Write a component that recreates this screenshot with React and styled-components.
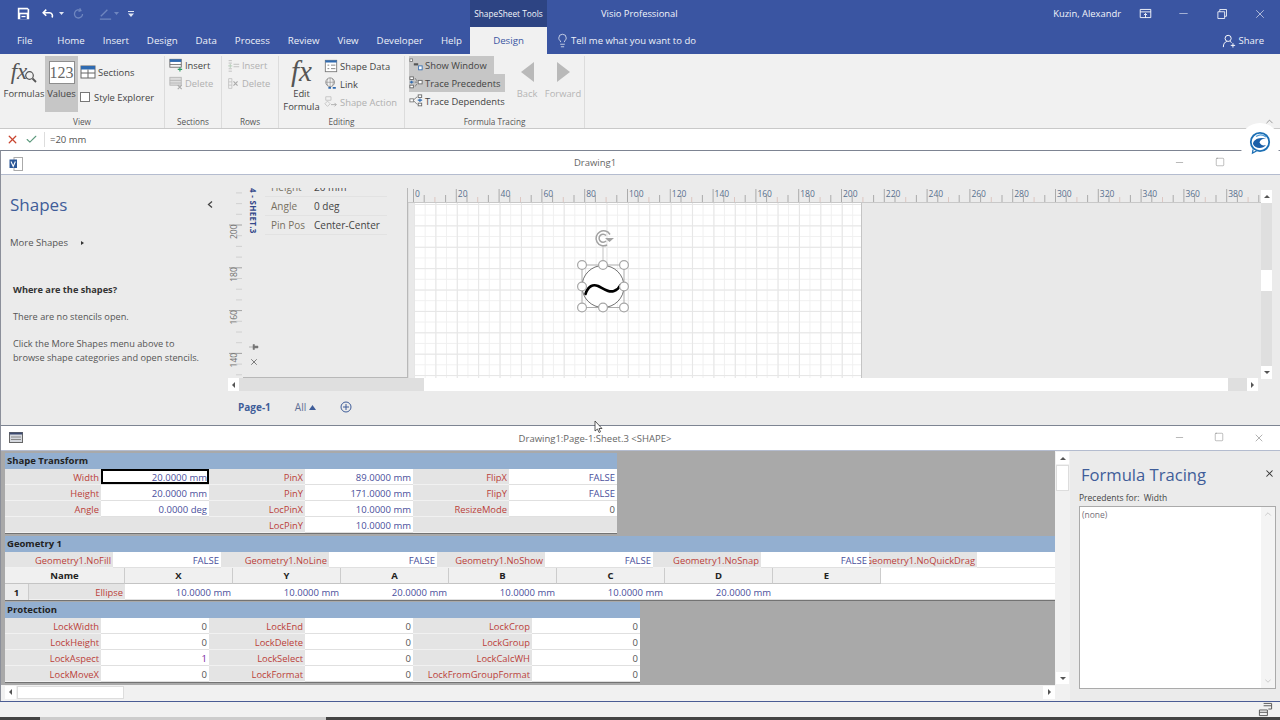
import React from "react";
import styled, { createGlobalStyle } from "styled-components";
import { Lightbulb, X, Minus, Square, ChevronUp, Check } from "lucide-react";

const GlobalStyle = createGlobalStyle`
  html, body { margin: 0; padding: 0; background: #f1f1f1; }
  * { box-sizing: border-box; }
  body { font-family: "Open Sans", "Liberation Sans", sans-serif; font-size: 9.5px; color: #444; }
`;

const Page = styled.div`
  position: relative;
  width: 1280px;
  height: 720px;
  overflow: hidden;
  display: flex;
  flex-direction: column;
`;

/* ---------- top blue bars ---------- */
const TitleBar = styled.div`
  height: 27px;
  flex: none;
  display: flex;
  align-items: center;
  background: #3a55a2;
  color: #f2f4fa;
`;
const Qat = styled.div`
  width: 470px;
  flex: none;
  display: flex;
  align-items: center;
  padding-left: 17px;
`;
const QatItem = styled.span`
  display: flex;
  margin-left: ${(p) => p.$ml || 0}px;
`;
const ToolsLabel = styled.div`
  width: 77px;
  height: 27px;
  flex: none;
  display: flex;
  align-items: center;
  justify-content: center;
  background: #2d4483;
  font-size: 8.3px;
`;
const AppTitle = styled.div`
  margin-left: 54px;
  font-size: 9.4px;
`;
const UserName = styled.div`
  margin-left: auto;
  margin-right: 18px;
  font-size: 9.4px;
`;
const WinIcons = styled.div`
  display: flex;
  align-items: center;
  justify-content: space-between;
  width: 141px;
  padding-right: 13px;
`;
const TabBar = styled.div`
  height: 27px;
  flex: none;
  display: flex;
  align-items: center;
  background: #3a55a2;
  color: #eef1f8;
`;
const TabList = styled.div`
  width: 470px;
  flex: none;
  display: flex;
  padding-left: 8px;
`;
const Tab = styled.div`
  padding: 0 9px;
  font-size: 9.7px;
  margin-right: ${(p) => p.$after || 0}px;
`;
const ActiveTab = styled.div`
  width: 77px;
  height: 27px;
  display: flex;
  align-items: center;
  justify-content: center;
  background: #f1f1f1;
  color: #3a55a2;
  font-size: 9.7px;
`;
const TellMe = styled.div`
  margin-left: 8px;
  display: flex;
  align-items: center;
  gap: 1px;
  font-size: 9.5px;
`;
const ShareBtn = styled.div`
  margin-left: auto;
  margin-right: 16px;
  display: flex;
  align-items: center;
  gap: 2px;
  font-size: 9.5px;
`;

/* ---------- ribbon ---------- */
const Ribbon = styled.div`
  position: relative;
  height: 75px;
  flex: none;
  display: flex;
  padding-top: 2px;
  background: #f1f1f1;
  border-bottom: 1px solid #c9c9c9;
`;
const Group = styled.div`
  width: ${(p) => p.$w}px;
  flex: none;
  display: flex;
  flex-direction: column;
  border-right: 1px solid #dcdcdc;
`;
const GroupBody = styled.div`
  flex: 1;
  display: flex;
  padding-left: ${(p) => p.$pad || 0}px;
`;
const GroupLabel = styled.div`
  height: 13px;
  text-align: center;
  font-size: 8.2px;
  color: #555;
  line-height: 14px;
`;
const BigBtn = styled.div`
  width: ${(p) => p.$w}px;
  height: 56px;
  flex: none;
  display: flex;
  flex-direction: column;
  align-items: center;
  font-size: 9.4px;
  line-height: 13px;
  text-align: center;
  color: ${(p) => (p.$off ? "#b5b5b5" : "#444")};
  background: ${(p) => (p.$on ? "#c6c6c6" : "transparent")};
`;
const BigIcon = styled.div`
  height: 30px;
  flex: none;
  display: flex;
  align-items: center;
  justify-content: center;
`;
const BigText = styled.span`
  margin-top: 1px;
`;
const FxGlyph = styled.span`
  font-family: "Liberation Serif", serif;
  font-style: italic;
  font-size: ${(p) => p.$size}px;
  color: #555;
  line-height: 1;
`;
const FxWrap = styled.span`
  display: flex;
  align-items: flex-end;
  svg { margin-left: -3px; }
`;
const NumBox = styled.span`
  width: 26px;
  height: 23px;
  margin-top: 3px;
  display: flex;
  align-items: center;
  justify-content: center;
  background: #fff;
  border: 1px solid #8e8e8e;
  font-family: "Liberation Serif", serif;
  font-size: 16px;
  color: #666;
`;
const SmallCol = styled.div`
  width: ${(p) => (p.$w ? `${p.$w}px` : "auto")};
  flex: none;
  margin-left: ${(p) => p.$ml || 0}px;
  display: flex;
  flex-direction: column;
  padding-top: ${(p) => p.$top || 0}px;
  gap: ${(p) => p.$gap || 0}px;
`;
const SmallBtn = styled.div`
  height: 18px;
  display: flex;
  align-items: center;
  gap: 2px;
  padding-right: 1px;
  width: ${(p) => (p.$w ? `${p.$w}px` : "auto")};
  font-size: 9.4px;
  white-space: nowrap;
  color: ${(p) => (p.$off ? "#b0b0b0" : "#444")};
  background: ${(p) => (p.$on ? "#c6c6c6" : "transparent")};
`;
const CheckBox = styled.span`
  width: 10px;
  height: 10px;
  margin-right: 2px;
  background: #fff;
  border: 1px solid #777;
`;
const Arrow = styled.div`
  width: 0;
  height: 0;
  margin-top: 1px;
  border-top: 10.5px solid transparent;
  border-bottom: 10.5px solid transparent;
  ${(p) => (p.$left ? "border-right" : "border-left")}: 13px solid #b9b9b9;
`;
const Collapse = styled.div`
  position: absolute;
  right: 5px;
  bottom: 1px;
  color: #555;
  line-height: 0;
`;

/* ---------- formula bar ---------- */
const FormulaBar = styled.div`
  height: 21px;
  flex: none;
  display: flex;
  align-items: center;
  background: #fff;
  padding-left: 6px;
  gap: 6px;
`;
const FormulaText = styled.div`
  height: 15px;
  line-height: 15px;
  padding-left: 5px;
  border-left: 1px solid #ddd;
  font-size: 9.5px;
  color: #555;
`;

/* ---------- document windows ---------- */
const DocWindow = styled.div`
  height: ${(p) => p.$h}px;
  flex: none;
  display: flex;
  flex-direction: column;
  border-top: 1px solid #7d8492;
  border-left: 1px solid #8b8f9a;
`;
const DocTitle = styled.div`
  position: relative;
  height: ${(p) => p.$h}px;
  flex: none;
  display: flex;
  align-items: center;
  justify-content: center;
  padding-right: 91px;
  background: #fff;
  border-bottom: 1px solid #b4bccf;
  font-size: 9.5px;
  color: #666;
`;
const DocIcon = styled.div`
  position: absolute;
  left: 8px;
  top: 6px;
  line-height: 0;
`;
const DocControls = styled.div`
  position: absolute;
  right: 15px;
  top: 6px;
  width: 91px;
  display: flex;
  justify-content: space-between;
  color: #666;
  line-height: 0;
`;
const ControlGap = styled.span`
  width: 11px;
`;
const DrawingBody = styled.div`
  flex: 1;
  display: flex;
  min-height: 0;
  background: #ebebeb;
`;
const ShapesPanel = styled.div`
  width: 227px;
  flex: none;
  padding: 18px 0 0 9px;
  color: #555;
`;
const PanelHead = styled.div`
  display: flex;
  align-items: center;
  justify-content: space-between;
  padding-right: 15px;
  font-size: 17px;
  color: #3f5d99;
`;
const MoreShapes = styled.div`
  margin-top: 20px;
  display: flex;
  align-items: center;
  gap: 13px;
  font-size: 9.5px;
`;
const Tri = styled.span`
  width: 0;
  height: 0;
  border-top: 2.5px solid transparent;
  border-bottom: 2.5px solid transparent;
  border-left: 3px solid #333;
`;
const Tip = styled.div`
  padding-left: 3px;
  font-size: 9.2px;
  line-height: 13.5px;
  margin-top: ${(p) => p.$top}px;
  font-weight: ${(p) => (p.$bold ? 700 : 400)};
  color: ${(p) => (p.$bold ? "#333" : "#555")};
`;
const DrawingArea = styled.div`
  width: 1052px;
  flex: none;
  padding-top: 13px;
  display: flex;
  flex-direction: column;
`;
const DrawingRow = styled.div`
  height: 190px;
  flex: none;
  display: flex;
`;
const VRuler = styled.svg`
  width: 15px;
  height: 190px;
  flex: none;
`;
const DataWindow = styled.div`
  position: relative;
  width: 165px;
  flex: none;
  overflow: hidden;
  background: #ebebeb;
  border-right: 1px solid #b8b8b8;
  border-bottom: 1px solid #b8b8b8;
  display: flex;
`;
const DataSide = styled.div`
  width: 22px;
  flex: none;
  display: flex;
  flex-direction: column;
  align-items: center;
  justify-content: space-between;
  padding-bottom: 10px;
  padding-right: 1px;
`;
const SideTitle = styled.div`
  writing-mode: vertical-rl;
  font-size: 8px;
  font-weight: 700;
  letter-spacing: 0.3px;
  color: #33488a;
  white-space: nowrap;
`;
const SideTools = styled.div`
  display: flex;
  flex-direction: column;
  gap: 6px;
  align-items: center;
  color: #444;
  line-height: 0;
`;
const DataRows = styled.div`
  margin-top: -10px;
  flex: 1;
  padding-right: 20px;
`;
const DataRow = styled.div`
  height: 19px;
  display: grid;
  grid-template-columns: 43px 1fr;
  align-items: center;
  padding-left: 6px;
  border-bottom: 1px solid #e2e2e2;
  font-size: 10px;
  color: #444;
`;
const DataKey = styled.span`
  color: #77705f;
`;
const CanvasCol = styled.div`
  width: 853px;
  flex: none;
  display: flex;
  flex-direction: column;
`;
const HRuler = styled.svg`
  width: 853px;
  height: 15px;
  flex: none;
`;
const Canvas = styled.div`
  position: relative;
  flex: 1;
  padding-left: 5px;
  background: #e9e9e9;
  border-left: 1px solid #dcdcdc;
  overflow: hidden;
`;
const DrawingPage = styled.div`
  width: 448px;
  height: 100%;
  background-color: #fff;
  border-right: 1px solid #c4c4c4;
  background-image:
    linear-gradient(to right, #e6e6e6 1px, transparent 1px),
    linear-gradient(to bottom, #e6e6e6 1px, transparent 1px),
    linear-gradient(to right, #f0f0f0 1px, transparent 1px),
    linear-gradient(to bottom, #f0f0f0 1px, transparent 1px);
  background-size: 21.4px 21.4px, 21.4px 21.4px, 10.7px 10.7px, 10.7px 10.7px;
  background-position: 0 1px;
`;
const ShapeLayer = styled.svg`
  position: absolute;
  left: 5px;
  top: 0;
`;
const VScroll = styled.div`
  width: 11px;
  flex: none;
  display: flex;
  flex-direction: column;
  background: #dfdfdf;
  height: 189px;
  margin-top: 2px;
`;
const ScrollBtn = styled.div`
  width: ${(p) => p.$w || 11}px;
  height: ${(p) => p.$h || 13}px;
  flex: none;
  display: flex;
  align-items: center;
  justify-content: center;
  background: #fff;
  margin: ${(p) => p.$m || 0};
`;
const ScrollTri = styled.span`
  width: 0;
  height: 0;
  ${(p) =>
    p.$dir === "up" &&
    "border-left: 3px solid transparent; border-right: 3px solid transparent; border-bottom: 3px solid #555;"}
  ${(p) =>
    p.$dir === "down" &&
    "border-left: 3px solid transparent; border-right: 3px solid transparent; border-top: 3px solid #555;"}
  ${(p) =>
    p.$dir === "left" &&
    "border-top: 3px solid transparent; border-bottom: 3px solid transparent; border-right: 3px solid #555;"}
  ${(p) =>
    p.$dir === "right" &&
    "border-top: 3px solid transparent; border-bottom: 3px solid transparent; border-left: 3px solid #555;"}
`;
const VThumb = styled.div`
  width: 11px;
  height: 21px;
  flex: none;
  margin-top: 67px;
  margin-bottom: auto;
  background: #fff;
`;
const HScroll = styled.div`
  height: 13px;
  width: 1030px;
  flex: none;
  display: flex;
  background: #dfdfdf;
`;
const HThumb = styled.div`
  width: 804px;
  margin-left: 185px;
  margin-right: auto;
  background: #fff;
`;
const PageTabs = styled.div`
  margin-top: 9px;
  display: flex;
  align-items: center;
  padding-left: 10px;
  font-size: 10px;
  color: #667;
`;
const PageName = styled.span`
  font-weight: 700;
  color: #3f5d99;
  margin-right: 24px;
`;
const AllTabs = styled.span`
  display: flex;
  align-items: center;
  gap: 3px;
  color: #5f6f95;
  margin-right: 24px;
`;

/* ---------- shapesheet ---------- */
const SheetBody = styled.div`
  flex: 1;
  display: flex;
  min-height: 0;
`;
const SheetCol = styled.div`
  width: 1069px;
  flex: none;
  display: flex;
  flex-direction: column;
`;
const SheetTop = styled.div`
  flex: 1;
  min-height: 0;
  display: flex;
`;
const SheetArea = styled.div`
  width: 1054px;
  flex: none;
  overflow: hidden;
  padding: 2px 0 0 4px;
  background: #a9a9a9;
`;
const Section = styled.div`
  width: ${(p) => p.$w};
  margin-bottom: ${(p) => p.$mb || 0}px;
  border-bottom: 1px solid #737373;
  background: #fff;
`;
const SectionHead = styled.div`
  height: 16px;
  padding: 0 0 1px 2px;
  display: flex;
  align-items: center;
  background: #93afd0;
  font-size: 9.5px;
  font-weight: 700;
  color: #222;
`;
const SheetGrid = styled.div`
  display: grid;
  grid-template-columns: ${(p) => p.$cols};
  grid-auto-rows: 16px;
`;
const Label = styled.div`
  display: flex;
  align-items: center;
  justify-content: flex-end;
  overflow: hidden;
  white-space: nowrap;
  padding: 1px 2px 0 0;
  background: #e4e4e4;
  border-bottom: 1px solid #f1f1f1;
  font-size: 9.4px;
  color: #bb3f3a;
`;
const Value = styled.div`
  display: flex;
  align-items: center;
  justify-content: flex-end;
  white-space: nowrap;
  padding: 1px 2px 0 0;
  background: #fff;
  border-bottom: 1px solid #e0e0e0;
  font-size: 9.5px;
  color: ${(p) => p.$color || "#4a4f9c"};
  ${(p) => p.$active && "box-shadow: inset 0 0 0 2px #000;"}
`;
const ColHead = styled.div`
  grid-column: span ${(p) => p.$span || 1};
  display: flex;
  align-items: center;
  justify-content: center;
  background: #f0f0f0;
  border-right: 1px solid #ccc;
  border-bottom: 1px solid #c4c4c4;
  font-size: 9.5px;
  font-weight: 700;
  color: #222;
`;
const RowNum = styled(ColHead)`
  background: #ececec;
  border-bottom: none;
`;
const Blank = styled.div`
  background: #fff;
  border-bottom: 1px solid #e0e0e0;
`;
const SheetVScroll = styled.div`
  width: 15px;
  flex: none;
  display: flex;
  flex-direction: column;
  background: #f1f1f1;
`;
const SheetVThumb = styled.div`
  width: 13px;
  height: 26px;
  margin: 1px 1px auto;
  background: #fff;
  border: 1px solid #ddd;
`;
const SheetHScroll = styled.div`
  height: 14px;
  width: 1054px;
  flex: none;
  display: flex;
  align-items: center;
  padding-left: 4px;
  background: #f1f1f1;
`;
const SheetHThumb = styled.div`
  width: 107px;
  height: 13px;
  margin-left: 1px;
  margin-right: auto;
  background: #fff;
  border: 1px solid #ddd;
`;
const SheetFoot = styled.div`
  height: 2px;
  flex: none;
  background: #f1f1f1;
`;
const TracePanel = styled.div`
  flex: 1;
  padding: 14px 4px 0 9px;
  background: #ebebeb;
`;
const TraceHead = styled.div`
  display: flex;
  align-items: center;
  justify-content: space-between;
  padding: 0 1px 0 2px;
  font-size: 16.6px;
  line-height: 20px;
  color: #3f5d99;
  svg { margin-top: -4px; }
`;
const TraceFor = styled.div`
  margin-top: 7px;
  font-size: 8.5px;
  line-height: 12px;
  color: #444;
`;
const TraceBox = styled.div`
  position: relative;
  height: 183px;
  margin-top: 2px;
  padding: 2px;
  background: #fff;
  border: 1px solid #aaa;
  font-size: 8.5px;
  color: #76707a;
`;
const TraceScroll = styled.div`
  position: absolute;
  right: 0;
  top: 0;
  bottom: 0;
  width: 14px;
  padding: 2px 0;
  display: flex;
  flex-direction: column;
  align-items: center;
  justify-content: space-between;
  background: #f4f4f4;
  color: #c4c4c4;
  line-height: 0;
`;
const FlipDown = styled.span`
  display: flex;
  transform: rotate(180deg);
`;

/* ---------- status bar and overlays ---------- */
const StatusBar = styled.div`
  flex: 1;
  display: flex;
  align-items: center;
  justify-content: flex-end;
  padding-right: 7px;
  background: #f1f1f1;
  border-top: 1px solid #4a5c94;
`;
const Foot = styled.div`
  height: 3px;
  flex: none;
  background: linear-gradient(to right, #444 40px, #ccc 40px, #ccc 326px, #444 326px);
`;
const Bubble = styled.div`
  position: absolute;
  left: 1240px;
  top: 123px;
  width: 40px;
  height: 40px;
  display: flex;
  align-items: center;
  justify-content: center;
  border-radius: 50%;
  background: #fff;
`;
const Cursor = styled.svg`
  position: absolute;
  left: 594px;
  top: 420px;
`;

/* ---------- icons ---------- */
const Icon = ({ children, size = 14 }) => (
  <svg width={size} height={size} viewBox="0 0 16 16" fill="none">
    {children}
  </svg>
);
const SaveIcon = () => (
  <Icon size={13}>
    <path d="M1 1h12l2 2v12H1z" fill="#fff" />
    <rect x="3" y="3" width="10" height="4" fill="#3a55a2" />
    <rect x="4" y="9" width="8" height="6" fill="#3a55a2" />
    <rect x="5.5" y="11" width="5" height="1.500" fill="#fff" />
  </Icon>
);
const UndoIcon = () => (
  <Icon size={14}>
    <path d="M6 3L2.500 6.500 6 10M3 6.500h6.500a3.500 3.500 0 0 1 3 5.500" stroke="#fff" strokeWidth="1.800" />
  </Icon>
);
const RedoIcon = () => (
  <Icon size={13}>
    <path d="M11 4.500A5 5 0 1 0 13 8.500M9.500 1.500l1.500 3-3 1" stroke="#6f86bf" strokeWidth="1.600" />
  </Icon>
);
const PenIcon = () => (
  <Icon size={15}>
    <path d="M3 11L10 4M2 14h12" stroke="#6f86bf" strokeWidth="1.400" />
  </Icon>
);
const DropTri = ({ color = "#dfe5f3" }) => (
  <svg width="5" height="4" viewBox="0 0 5 4">
    <path d="M0 0h5L2.500 3z" fill={color} />
  </svg>
);
const CustomizeIcon = () => (
  <svg width="6" height="6" viewBox="0 0 6 6">
    <path d="M0 0h6v1H0zM0 2.500h6L3 6z" fill="#dfe5f3" />
  </svg>
);
const RestoreIcon = () => (
  <Icon size={12}>
    <path d="M2.500 5h9v9h-9zM5 5V2h9v9h-2.500" stroke="#fff" strokeWidth="1.100" />
  </Icon>
);
const RibbonOptIcon = () => (
  <Icon size={13}>
    <path d="M1.500 3h13v10h-13zM1.500 6h13M8 13V8M6 10l2-2 2 2" stroke="#fff" strokeWidth="1.100" />
  </Icon>
);
const ShareIcon = () => (
  <Icon size={14}>
    <circle cx="7" cy="5" r="3.500" stroke="#fff" strokeWidth="1.100" />
    <path d="M1.500 15c0-4 2-6 4-6.500M9 8.500c.7.200 1.400.600 2 1.200M10 13h5M12.500 10.500v5" stroke="#fff" strokeWidth="1.100" />
  </Icon>
);
const SectionsIcon = () => (
  <Icon size={16}>
    <rect x="1" y="2" width="14" height="12" fill="#fff" stroke="#666" />
    <rect x="1" y="2" width="14" height="3.500" fill="#2f6ab0" />
    <path d="M1 9h14M8 5.500V14" stroke="#666" />
  </Icon>
);
const InsertIcon = () => (
  <Icon size={14}>
    <rect x="1" y="1.500" width="13" height="9" fill="#fff" stroke="#666" />
    <rect x="1" y="1.500" width="13" height="3" fill="#2f6ab0" />
    <path d="M1 7.500h13" stroke="#666" />
    <path d="M10 13h5M12.500 10.500v5" stroke="#2e9b62" strokeWidth="1.300" />
  </Icon>
);
const DeleteIcon = () => (
  <Icon size={14}>
    <rect x="1" y="1.500" width="13" height="9" fill="#ddd" stroke="#b5b5b5" />
    <path d="M1 5h13M1 8h13" stroke="#b5b5b5" />
    <path d="M10 10.500l4.500 4.500M14.500 10.500L10 15" stroke="#aaa" strokeWidth="1.300" />
  </Icon>
);
const RowInsertIcon = () => (
  <Icon size={13}>
    <path d="M2 2h4M2 5h4M2 12h4M2 15h4M8 6.500h7M8 9.500h7" stroke="#c0c0c0" strokeWidth="1.200" />
    <path d="M1.500 8.500h5M4 6v5" stroke="#b5cdb9" strokeWidth="1.200" />
  </Icon>
);
const RowDeleteIcon = () => (
  <Icon size={13}>
    <path d="M2 2h4v12H2zM2 6h4M2 10h4" stroke="#c0c0c0" />
    <path d="M8 5.500l5 5M13 5.500l-5 5" stroke="#a9a9a9" strokeWidth="1.400" />
  </Icon>
);
const ShapeDataIcon = () => (
  <Icon size={14}>
    <rect x="1.500" y="1.500" width="13" height="13" fill="#fff" stroke="#777" />
    <rect x="1.500" y="1.500" width="13" height="2.500" fill="#2f6ab0" />
    <path d="M4 7h2M8 7h5M4 11h2M8 11h5" stroke="#777" />
  </Icon>
);
const LinkIcon = () => (
  <Icon size={14}>
    <circle cx="7" cy="6" r="5" stroke="#8a8a8a" />
    <path d="M2 6h10M7 1v10M4.500 2c-1.500 2.500-1.500 5.500 0 8M9.500 2c1.500 2.500 1.500 5.500 0 8" stroke="#8a8a8a" strokeWidth=".7" />
    <path d="M5 12.500h3M10 12.500h3.500" stroke="#2f6ab0" strokeWidth="2" />
  </Icon>
);
const ShapeActionIcon = () => (
  <Icon size={14}>
    <path d="M2 2h6v4H2zM1 10l3-3 3 3-3 3z" stroke="#c2c2c2" />
    <path d="M8 11h6M12 9l2 2-2 2" stroke="#a9a9a9" />
  </Icon>
);
const ShowWindowIcon = () => (
  <Icon size={14}>
    <rect x="1" y="1" width="3" height="3" fill="#fff" stroke="#777" />
    <rect x="5.500" y="6" width="5" height="2.500" fill="#555" />
    <rect x="11" y="9" width="4" height="4.500" fill="#fff" stroke="#2f6ab0" />
  </Icon>
);
const TracePrecIcon = () => (
  <Icon size={14}>
    <rect x="1" y="1" width="4" height="3" fill="#fff" stroke="#666" />
    <path d="M1 7h4M3 5.500v3" stroke="#2f6ab0" strokeWidth="1.200" />
    <rect x="1" y="10.500" width="4" height="3" fill="#fff" stroke="#666" />
    <path d="M6.500 7h3M7 2.500l2 3M7 12l2-3" stroke="#777" />
    <rect x="10.500" y="5" width="4.500" height="4" fill="#fff" stroke="#666" />
  </Icon>
);
const TraceDepIcon = () => (
  <Icon size={14}>
    <rect x="1" y="5.500" width="4" height="3.500" fill="#fff" stroke="#777" />
    <path d="M5.500 6.500l4-3.500M5.500 8l4 4" stroke="#777" />
    <rect x="10.500" y="1" width="4" height="3" fill="#fff" stroke="#666" />
    <path d="M10 7h5M12.500 5v4" stroke="#2f6ab0" strokeWidth="1.200" />
    <rect x="10.500" y="10.500" width="4" height="3" fill="#fff" stroke="#666" />
  </Icon>
);
const MagnifyFx = () => (
  <FxWrap>
    <FxGlyph $size={23}>fx</FxGlyph>
    <svg width="13" height="13" viewBox="0 0 13 13">
      <circle cx="5.500" cy="5.500" r="3.800" fill="none" stroke="#555" strokeWidth="1.200" />
      <path d="M8.500 8.500l3.500 3.500" stroke="#555" strokeWidth="1.800" />
    </svg>
  </FxWrap>
);
const VisioIcon = () => (
  <svg width="14" height="14" viewBox="0 0 14 14">
    <rect x="5" y="0.500" width="8.500" height="13" fill="#fff" stroke="#aaa" />
    <rect x="0.500" y="2.500" width="7.500" height="8.500" fill="#2b5797" />
    <path d="M2 4.500l2.200 5 2.200-5" stroke="#fff" fill="none" strokeWidth="1.100" />
  </svg>
);
const SheetIcon = () => (
  <svg width="14" height="11" viewBox="0 0 14 11">
    <rect x="0.500" y="0.500" width="13" height="10" fill="#d5d8de" stroke="#666" />
    <rect x="0.500" y="0.500" width="13" height="2" fill="#3c4a70" />
    <path d="M2 5h10M2 7.500h10" stroke="#888" />
  </svg>
);
const PinIcon = () => (
  <svg width="10" height="8" viewBox="0 0 10 8">
    <path d="M0 4h4M4 1.500h1.500V3H9v2H5.500v1.500H4z" fill="#777" stroke="#777" strokeWidth=".5" />
  </svg>
);
const ChatIcon = () => (
  <svg width="22" height="24" viewBox="0 0 22 24">
    <circle cx="11" cy="11" r="9.200" fill="#fff" stroke="#1c6fb4" strokeWidth="1.800" />
    <path d="M4 13c0-4 6-8 14-5-4-1-7 1-7.500 3.500C12 14 14 15 17 14c-3 4-11 4-13-1z" fill="#1a5fa8" />
    <path d="M7 5.500c3-2 7-2 10 .5" stroke="#4f9ad6" strokeWidth="1.200" fill="none" />
    <path d="M4 18.500l-.500 3.500 4-2" fill="#fff" stroke="#1c6fb4" strokeWidth="1.300" />
  </svg>
);
const TileIcon = () => (
  <Icon size={15}>
    <path d="M6 1.500h8.500v6H11M1.500 8.500H10v6H1.500zM1.500 11h8.500M6 4h8.500" stroke="#555" />
  </Icon>
);

/* ---------- rulers and page drawing ---------- */
const rulerInk = "#8f8f8f";
const labelInk = "#58708f";
const pxPerMm = 2.14;

const TopRuler = () => {
  const ticks = [];
  for (let mm = 0; mm <= 395; mm += 5) {
    const x = 5.5 + mm * pxPerMm;
    const major = mm % 20 === 0;
    const mid = mm % 10 === 0;
    ticks.push(
      <line key={mm} x1={x} x2={x} y1={major ? 1 : mid ? 9 : 7} y2={14} stroke={mid && !major ? "#d9b8b0" : rulerInk} strokeWidth=".7" />,
    );
    if (major) {
      ticks.push(
        <text key={`t${mm}`} x={x + 1.5} y={9} fontSize="8.5" fill={labelInk} fontFamily="Open Sans, sans-serif">
          {mm}
        </text>,
      );
    }
  }
  return (
    <HRuler viewBox="0 0 853 15">
      <rect width="853" height="15" fill="#ebebeb" />
      <line x1="0" x2="853" y1="14.5" y2="14.5" stroke="#c8c8c8" />
      {ticks}
    </HRuler>
  );
};

const SideRuler = () => {
  const ticks = [];
  for (let mm = 215; mm >= 130; mm -= 5) {
    const y = 37 + (200 - mm) * pxPerMm;
    const major = mm % 20 === 0;
    ticks.push(
      <line key={mm} x1={major ? 1 : 8} x2={14} y1={y} y2={y} stroke={major ? rulerInk : "#c9c9c9"} strokeWidth=".8" />,
    );
    if (major) {
      ticks.push(
        <text key={`t${mm}`} transform={`translate(9 ${y + 14}) rotate(-90)`} fontSize="8.5" fill="#70706f" fontFamily="Open Sans, sans-serif">
          {mm}
        </text>,
      );
    }
  }
  return (
    <VRuler viewBox="0 0 15 190">
      <rect width="15" height="190" fill="#ebebeb" />
      {ticks}
    </VRuler>
  );
};

const handles = [
  [582, 265], [603, 265], [624, 265],
  [582, 286.5], [624, 286.5],
  [582, 307.5], [603, 307.5], [624, 307.5],
];

const SelectedShape = () => (
  <ShapeLayer width="447" height="175" viewBox="414 203 447 175" fill="none">
    <circle cx="603" cy="286.5" r="21" fill="#fff" stroke="#333" strokeWidth=".7" />
    <rect x="582" y="265" width="42" height="42.5" stroke="#8a8a8a" strokeWidth=".7" />
    <path d="M585.500 294C588 286 593 284 598 286C604 289 609 293 614 291C617 290 619 288 620.500 285" stroke="#000" strokeWidth="2.600" strokeLinecap="round" />
    <line x1="603" y1="265" x2="603" y2="246" stroke="#cfcfcf" strokeWidth="1.300" />
    <path d="M610 234.500A7.500 7.500 0 1 0 607 245M606 235.500A4 4 0 1 0 606 241" stroke="#a2a2a2" strokeWidth="1.500" />
    <path d="M605 238h9l-4.500 4z" fill="#a2a2a2" />
    {handles.map(([x, y]) => (
      <circle key={`${x}-${y}`} cx={x} cy={y} r="4.400" fill="#fff" stroke="#a6a6a6" strokeWidth="1.200" />
    ))}
  </ShapeLayer>
);

/* ---------- sheet data ---------- */
const transformRows = [
  ["Width", "20.0000 mm", "PinX", "89.0000 mm", "FlipX", "FALSE"],
  ["Height", "20.0000 mm", "PinY", "171.0000 mm", "FlipY", "FALSE"],
  ["Angle", "0.0000 deg", "LocPinX", "10.0000 mm", "ResizeMode", "0"],
  ["", "", "LocPinY", "10.0000 mm", "", ""],
];
const protectionRows = [
  ["LockWidth", "0", "LockEnd", "0", "LockCrop", "0"],
  ["LockHeight", "0", "LockDelete", "0", "LockGroup", "0"],
  ["LockAspect", "1", "LockSelect", "0", "LockCalcWH", "0"],
  ["LockMoveX", "0", "LockFormat", "0", "LockFromGroupFormat", "0"],
];
const geometryFlags = [
  ["Geometry1.NoFill", "FALSE"],
  ["Geometry1.NoLine", "FALSE"],
  ["Geometry1.NoShow", "FALSE"],
  ["Geometry1.NoSnap", "FALSE"],
  ["Geometry1.NoQuickDrag", ""],
];
const geometryValues = ["10.0000 mm", "10.0000 mm", "20.0000 mm", "10.0000 mm", "10.0000 mm", "20.0000 mm", ""];

const pairColor = (v) => {
  if (v === "0") return "#555";
  if (v === "1") return "#7a1fa0";
  return undefined;
};

const PairRows = ({ rows, activeFirst }) =>
  rows.map((row, r) =>
    row.map((text, c) =>
      c % 2 === 0 || text === "" ? (
        <Label key={`${r}-${c}`}>{text}</Label>
      ) : (
        <Value key={`${r}-${c}`} $color={pairColor(text)} $active={activeFirst && r === 0 && c === 1}>
          {text}
        </Value>
      ),
    ),
  );

export default function App() {
  return (
    <Page>
      <GlobalStyle />
      <TitleBar>
        <Qat>
          <QatItem><SaveIcon /></QatItem>
          <QatItem $ml={11}><UndoIcon /></QatItem>
          <QatItem $ml={4}><DropTri /></QatItem>
          <QatItem $ml={8}><RedoIcon /></QatItem>
          <QatItem $ml={13}><PenIcon /></QatItem>
          <QatItem $ml={1}><DropTri color="#6f86bf" /></QatItem>
          <QatItem $ml={9}><CustomizeIcon /></QatItem>
        </Qat>
        <ToolsLabel>ShapeSheet Tools</ToolsLabel>
        <AppTitle>Visio Professional</AppTitle>
        <UserName>Kuzin, Alexandr</UserName>
        <WinIcons>
          <RibbonOptIcon />
          <Minus size={13} strokeWidth={1} color="#fff" />
          <RestoreIcon />
          <X size={14} strokeWidth={1} color="#fff" />
        </WinIcons>
      </TitleBar>
      <TabBar>
        <TabList>
          <Tab $after={7}>File</Tab>
          <Tab>Home</Tab>
          <Tab>Insert</Tab>
          <Tab>Design</Tab>
          <Tab>Data</Tab>
          <Tab>Process</Tab>
          <Tab>Review</Tab>
          <Tab>View</Tab>
          <Tab>Developer</Tab>
          <Tab>Help</Tab>
        </TabList>
        <ActiveTab>Design</ActiveTab>
        <TellMe>
          <Lightbulb size={15} strokeWidth={1.2} />
          Tell me what you want to do
        </TellMe>
        <ShareBtn>
          <ShareIcon />
          Share
        </ShareBtn>
      </TabBar>

      <Ribbon>
        <Group $w={165}>
          <GroupBody $pad={3}>
            <BigBtn $w={42}>
              <BigIcon>
                <MagnifyFx />
              </BigIcon>
              <BigText>Formulas</BigText>
            </BigBtn>
            <BigBtn $w={33} $on>
              <BigIcon>
                <NumBox>123</NumBox>
              </BigIcon>
              <BigText>Values</BigText>
            </BigBtn>
            <SmallCol $top={7} $gap={7} $ml={2}>
              <SmallBtn>
                <SectionsIcon />
                Sections
              </SmallBtn>
              <SmallBtn>
                <CheckBox />
                Style Explorer
              </SmallBtn>
            </SmallCol>
          </GroupBody>
          <GroupLabel>View</GroupLabel>
        </Group>
        <Group $w={57}>
          <GroupBody $pad={4}>
            <SmallCol>
              <SmallBtn>
                <InsertIcon />
                Insert
              </SmallBtn>
              <SmallBtn $off>
                <DeleteIcon />
                Delete
              </SmallBtn>
            </SmallCol>
          </GroupBody>
          <GroupLabel>Sections</GroupLabel>
        </Group>
        <Group $w={57}>
          <GroupBody $pad={5}>
            <SmallCol>
              <SmallBtn $off>
                <RowInsertIcon />
                Insert
              </SmallBtn>
              <SmallBtn $off>
                <RowDeleteIcon />
                Delete
              </SmallBtn>
            </SmallCol>
          </GroupBody>
          <GroupLabel>Rows</GroupLabel>
        </Group>
        <Group $w={126}>
          <GroupBody $pad={4}>
            <BigBtn $w={37}>
              <BigIcon>
                <FxGlyph $size={29}>fx</FxGlyph>
              </BigIcon>
              <BigText>Edit Formula</BigText>
            </BigBtn>
            <SmallCol $top={1} $ml={4}>
              <SmallBtn>
                <ShapeDataIcon />
                Shape Data
              </SmallBtn>
              <SmallBtn>
                <LinkIcon />
                Link
              </SmallBtn>
              <SmallBtn $off>
                <ShapeActionIcon />
                Shape Action
              </SmallBtn>
            </SmallCol>
          </GroupBody>
          <GroupLabel>Editing</GroupLabel>
        </Group>
        <Group $w={180}>
          <GroupBody $pad={4}>
            <SmallCol $w={100}>
              <SmallBtn $on $w={85}>
                <ShowWindowIcon />
                Show Window
              </SmallBtn>
              <SmallBtn $on $w={96}>
                <TracePrecIcon />
                Trace Precedents
              </SmallBtn>
              <SmallBtn>
                <TraceDepIcon />
                Trace Dependents
              </SmallBtn>
            </SmallCol>
            <BigBtn $w={36} $off>
              <BigIcon>
                <Arrow $left />
              </BigIcon>
              <BigText>Back</BigText>
            </BigBtn>
            <BigBtn $w={36} $off>
              <BigIcon>
                <Arrow />
              </BigIcon>
              <BigText>Forward</BigText>
            </BigBtn>
          </GroupBody>
          <GroupLabel>Formula Tracing</GroupLabel>
        </Group>
        <Collapse>
          <ChevronUp size={11} strokeWidth={1.2} />
        </Collapse>
      </Ribbon>

      <FormulaBar>
        <X size={13} strokeWidth={2.4} color="#c8452f" />
        <Check size={13} strokeWidth={2} color="#5d9a7d" />
        <FormulaText>=20 mm</FormulaText>
      </FormulaBar>

      <DocWindow $h={275}>
        <DocTitle $h={24}>
          <DocIcon>
            <VisioIcon />
          </DocIcon>
          Drawing1
          <DocControls>
            <Minus size={11} strokeWidth={1} />
            <Square size={10} strokeWidth={1} />
            <ControlGap />
          </DocControls>
        </DocTitle>
        <DrawingBody>
          <ShapesPanel>
            <PanelHead>
              Shapes
              <svg width="6" height="7" viewBox="0 0 6 7">
                <path d="M5 .5L1.500 3.500 5 6.500" stroke="#444" strokeWidth="1.300" fill="none" />
              </svg>
            </PanelHead>
            <MoreShapes>
              More Shapes
              <Tri />
            </MoreShapes>
            <Tip $bold $top={34}>Where are the shapes?</Tip>
            <Tip $top={13}>There are no stencils open.</Tip>
            <Tip $top={14}>
              Click the More Shapes menu above to
              <br />
              browse shape categories and open stencils.
            </Tip>
          </ShapesPanel>
          <DrawingArea>
            <DrawingRow>
              <SideRuler />
              <DataWindow>
                <DataSide>
                  <SideTitle>4 - SHEET.3</SideTitle>
                  <SideTools>
                    <PinIcon />
                    <X size={10} strokeWidth={1.6} />
                  </SideTools>
                </DataSide>
                <DataRows>
                  <DataRow>
                    <DataKey>Height</DataKey>20 mm
                  </DataRow>
                  <DataRow>
                    <DataKey>Angle</DataKey>0 deg
                  </DataRow>
                  <DataRow>
                    <DataKey>Pin Pos</DataKey>Center-Center
                  </DataRow>
                </DataRows>
              </DataWindow>
              <CanvasCol>
                <TopRuler />
                <Canvas>
                  <DrawingPage />
                  <SelectedShape />
                </Canvas>
              </CanvasCol>
              <VScroll>
                <ScrollBtn>
                  <ScrollTri $dir="up" />
                </ScrollBtn>
                <VThumb />
                <ScrollBtn>
                  <ScrollTri $dir="down" />
                </ScrollBtn>
              </VScroll>
            </DrawingRow>
            <HScroll>
              <ScrollBtn>
                <ScrollTri $dir="left" />
              </ScrollBtn>
              <HThumb />
              <ScrollBtn>
                <ScrollTri $dir="right" />
              </ScrollBtn>
            </HScroll>
            <PageTabs>
              <PageName>Page-1</PageName>
              <AllTabs>
                All
                <svg width="7" height="5" viewBox="0 0 7 5">
                  <path d="M0 5L3.500 0 7 5z" fill="#3f5d99" />
                </svg>
              </AllTabs>
              <svg width="12" height="12" viewBox="0 0 12 12" fill="none">
                <circle cx="6" cy="6" r="5" stroke="#3f5d99" />
                <path d="M3 6h6M6 3v6" stroke="#3f5d99" />
              </svg>
            </PageTabs>
          </DrawingArea>
        </DrawingBody>
      </DocWindow>

      <DocWindow $h={276}>
        <DocTitle $h={25}>
          <DocIcon>
            <SheetIcon />
          </DocIcon>
          Drawing1:Page-1:Sheet.3 &lt;SHAPE&gt;
          <DocControls>
            <Minus size={11} strokeWidth={1} />
            <Square size={10} strokeWidth={1} />
            <X size={12} strokeWidth={1} />
          </DocControls>
        </DocTitle>
        <SheetBody>
          <SheetCol>
            <SheetTop>
              <SheetArea>
                <Section $w="612px" $mb={2}>
                  <SectionHead>Shape Transform</SectionHead>
                  <SheetGrid $cols="96px 108px 96px 108px 96px 108px">
                    <PairRows rows={transformRows} activeFirst />
                  </SheetGrid>
                </Section>
                <Section $w="100%" $mb={1}>
                  <SectionHead>Geometry 1</SectionHead>
                  <SheetGrid $cols="repeat(9, 108px) 1fr">
                    {geometryFlags.map(([name, val]) => (
                      <React.Fragment key={name}>
                        <Label>{name}</Label>
                        {val ? <Value>{val}</Value> : <Blank />}
                      </React.Fragment>
                    ))}
                  </SheetGrid>
                  <SheetGrid $cols="24px 96px repeat(7, 108px) 1fr">
                    <ColHead $span={2}>Name</ColHead>
                    {["X", "Y", "A", "B", "C", "D", "E"].map((h) => (
                      <ColHead key={h}>{h}</ColHead>
                    ))}
                    <Blank />
                    <RowNum>1</RowNum>
                    <Label>Ellipse</Label>
                    {geometryValues.map((v, i) => (
                      <Value key={i}>{v}</Value>
                    ))}
                    <Blank />
                  </SheetGrid>
                </Section>
                <Section $w="635px">
                  <SectionHead>Protection</SectionHead>
                  <SheetGrid $cols="96px 108px 96px 108px 119px 108px">
                    <PairRows rows={protectionRows} />
                  </SheetGrid>
                </Section>
              </SheetArea>
              <SheetVScroll>
                <ScrollBtn $w={13} $h={12} $m="1px 1px 0">
                  <ScrollTri $dir="up" />
                </ScrollBtn>
                <SheetVThumb />
                <ScrollBtn $w={13} $h={12} $m="0 1px 1px">
                  <ScrollTri $dir="down" />
                </ScrollBtn>
              </SheetVScroll>
            </SheetTop>
            <SheetHScroll>
              <ScrollBtn $w={11} $h={13}>
                <ScrollTri $dir="left" />
              </ScrollBtn>
              <SheetHThumb />
              <ScrollBtn $w={12} $h={13}>
                <ScrollTri $dir="right" />
              </ScrollBtn>
            </SheetHScroll>
            <SheetFoot />
          </SheetCol>
          <TracePanel>
            <TraceHead>
              Formula Tracing
              <X size={11} strokeWidth={2.2} color="#333" />
            </TraceHead>
            <TraceFor>Precedents for:&nbsp; Width</TraceFor>
            <TraceBox>
              (none)
              <TraceScroll>
                <ChevronUp size={10} />
                <FlipDown>
                  <ChevronUp size={10} />
                </FlipDown>
              </TraceScroll>
            </TraceBox>
          </TracePanel>
        </SheetBody>
      </DocWindow>

      <StatusBar>
        <TileIcon />
      </StatusBar>
      <Foot />

      <Bubble>
        <ChatIcon />
      </Bubble>
      <Cursor width="10" height="14" viewBox="0 0 10 14">
        <path d="M1 1v10l2.500-2 1.500 3.500 1.500-.7L5 8.500h3z" fill="#fff" stroke="#333" strokeWidth=".8" />
      </Cursor>
    </Page>
  );
}
